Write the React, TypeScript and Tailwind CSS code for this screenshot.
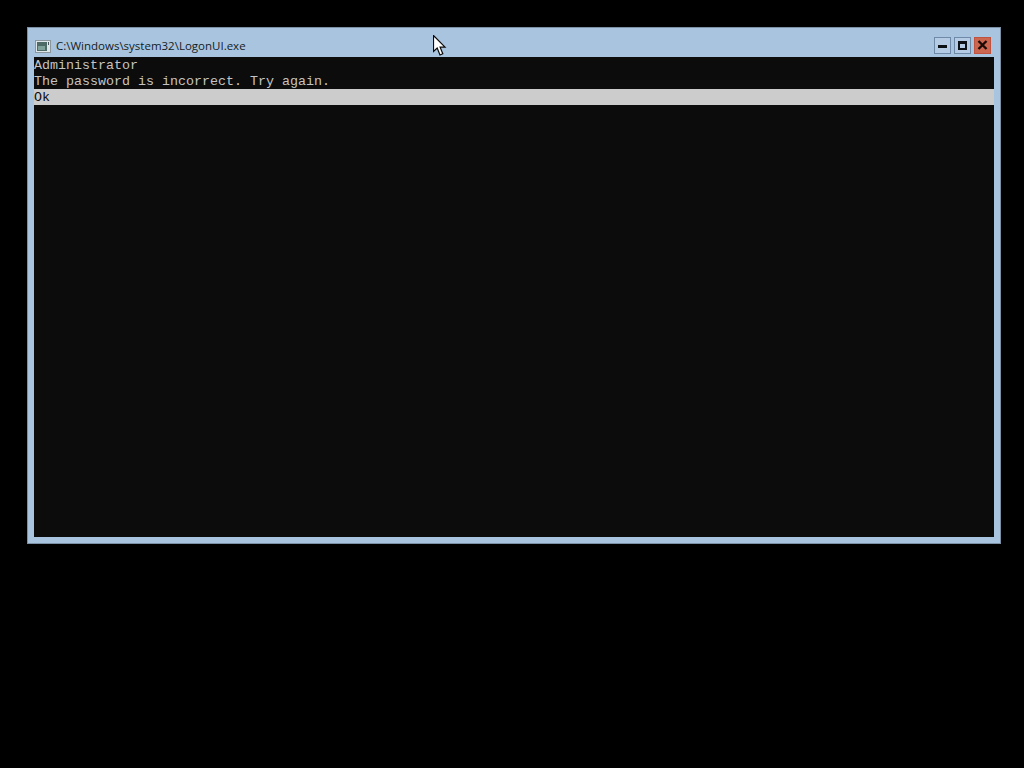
import "react";

function ConsoleIcon() {
  return (
    <svg width="16" height="13" viewBox="0 0 16 13" className="shrink-0">
      <rect x="0.5" y="0.5" width="15" height="12" fill="#dfe6ea" stroke="#8b979f" />
      <rect x="2" y="2" width="10" height="9" fill="#4f6b68" />
      <rect x="3" y="6" width="7" height="4" fill="#7fa39a" />
      <rect x="13" y="2" width="1" height="3" fill="#4a555b" />
    </svg>
  );
}

function Cursor() {
  return (
    <svg width="14" height="22" viewBox="0 0 14 22" className="absolute left-[433px] top-[35px]">
      <path
        d="M0.5 0.5 L0.5 16.5 L4.2 13 L7 20 L9.8 18.8 L7.1 12.2 L12 12.2 Z"
        fill="#fff"
        stroke="#0a0a0a"
        strokeWidth="1.2"
      />
    </svg>
  );
}

function CaptionButton({ children, close }: { children: React.ReactNode; close?: boolean }) {
  return (
    <div
      className={`flex h-[17px] w-[17px] items-center justify-center border ${
        close ? "border-[#c0533f] bg-[#cb6750]" : "border-[#6f8aa8] bg-[#b4cbe3]"
      }`}
    >
      {children}
    </div>
  );
}

export default function App() {
  return (
    <div className="relative h-[768px] w-[1024px] overflow-hidden bg-black pl-[27px] pt-[27px]">
      <div className="flex h-[517px] w-[974px] flex-col border border-[#7d91a6] bg-[#a9c4de] px-[6px] pb-[6px]">
        <div className="flex h-[29px] items-center pt-[7px]">
          <div className="ml-[1px] flex items-center gap-[5px]">
            <ConsoleIcon />
            <span className="font-['Open_Sans',sans-serif] text-[11.5px] text-[#141c24]">
              C:\Windows\system32\LogonUI.exe
            </span>
          </div>
          <div className="mb-[2px] ml-auto mr-[3px] flex gap-[3px]">
            <CaptionButton>
              <div className="mt-[3px] h-[3px] w-[9px] bg-[#0c1116]" />
            </CaptionButton>
            <CaptionButton>
              <div className="h-[9px] w-[9px] border-2 border-t-[3px] border-[#0c1116]" />
            </CaptionButton>
            <CaptionButton close>
              <svg width="11" height="10" viewBox="0 0 11 10">
                <path d="M1.5 1 L9.5 9 M9.5 1 L1.5 9" stroke="#1c0a06" strokeWidth="2.4" />
              </svg>
            </CaptionButton>
          </div>
        </div>
        <div className="flex-1 bg-[#0c0c0c] font-['Liberation_Mono',monospace] text-[13.33px] leading-[16px] text-[#c4c4c4]">
          <div className="h-4 whitespace-pre pt-[1px]">Administrator</div>
          <div className="h-4 whitespace-pre pt-[1px]">The password is incorrect. Try again.</div>
          <div className="h-4 whitespace-pre bg-[#cccccc] pt-[1px] text-[#0c0c0c]">Ok</div>
        </div>
      </div>
      <Cursor />
    </div>
  );
}
